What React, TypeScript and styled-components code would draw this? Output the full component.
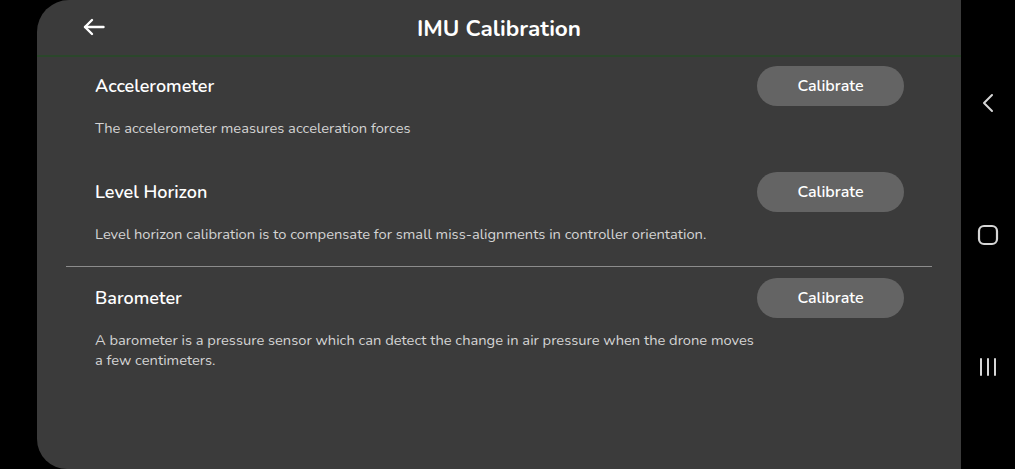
import React from "react";
import styled, { createGlobalStyle } from "styled-components";

const Global = createGlobalStyle`
  html, body { margin: 0; padding: 0; background: #000; }
  body { font-family: "Nunito", "Open Sans", "Noto Sans", sans-serif; }
  * { box-sizing: border-box; }
`;

const Screen = styled.div`
  width: 1015px;
  height: 469px;
  display: flex;
  background: #000;
  overflow: hidden;
`;

const Gutter = styled.div`
  width: 37px;
  flex: none;
`;

const Panel = styled.div`
  width: 924px;
  flex: none;
  background: #3b3b3b;
  border-radius: 32px 0 0 30px;
  display: flex;
  flex-direction: column;
`;

const Header = styled.header`
  height: 57px;
  flex: none;
  display: grid;
  grid-template-columns: 1fr auto 1fr;
  align-items: center;
  padding: 0 0 0 46px;
  border-bottom: 2px solid #2b472b;
`;

const BackButton = styled.button`
  justify-self: start;
  background: none;
  border: 0;
  padding: 0;
  display: flex;
  color: #fff;
  cursor: pointer;
  margin-top: -2px;
`;

const Title = styled.h1`
  margin: 1px 0 0 -46px;
  color: #fff;
  font-size: 22.5px;
  font-weight: 700;
`;

const Content = styled.div`
  display: flex;
  flex-direction: column;
`;

const Section = styled.section<{ $top: number; $bottom: number }>`
  display: flex;
  flex-direction: column;
  gap: 12px;
  padding: ${(p) => p.$top}px 57px ${(p) => p.$bottom}px 58px;
`;

const Row = styled.div`
  display: flex;
  align-items: center;
  justify-content: space-between;
  height: 40px;
`;

const SectionTitle = styled.h2`
  margin: 0;
  color: #fff;
  font-size: 18px;
  font-weight: 600;
`;

const CalibrateButton = styled.button`
  width: 147px;
  height: 40px;
  border: 0;
  border-radius: 20px;
  background: #646464;
  color: #fff;
  font-family: inherit;
  font-size: 16px;
  font-weight: 600;
  cursor: pointer;
`;

const Description = styled.p`
  margin: 0;
  max-width: 664px;
  color: #d4d4d4;
  font-size: 14.7px;
  line-height: 20px;
`;

const Divider = styled.hr`
  margin: 0 29px;
  border: 0;
  border-top: 1px solid #8c8c8c;
`;

const NavBar = styled.nav`
  flex: 1;
  display: flex;
  flex-direction: column;
  align-items: center;
  justify-content: space-between;
  padding: 93px 0 92px;
  color: #d6d6d6;
`;

const NavIcon = styled.svg`
  display: block;
`;

const sections = [
  {
    title: "Accelerometer",
    text: "The accelerometer measures acceleration forces",
    top: 9,
    bottom: 25,
  },
  {
    title: "Level Horizon",
    text: "Level horizon calibration is to compensate for small miss-alignments in controller orientation.",
    top: 9,
    bottom: 22,
  },
];

export default function App() {
  return (
    <>
      <Global />
      <Screen>
        <Gutter />
        <Panel>
          <Header>
            <BackButton aria-label="Back">
              <svg width="22" height="18" viewBox="0 0 22 18" fill="none" stroke="currentColor" strokeWidth="2.4" strokeLinecap="round" strokeLinejoin="round">
                <path d="M20.5 9H2" />
                <path d="M9 2L2 9l7 7" />
              </svg>
            </BackButton>
            <Title>IMU Calibration</Title>
            <span />
          </Header>
          <Content>
            {sections.map((s) => (
              <Section key={s.title} $top={s.top} $bottom={s.bottom}>
                <Row>
                  <SectionTitle>{s.title}</SectionTitle>
                  <CalibrateButton>Calibrate</CalibrateButton>
                </Row>
                <Description>{s.text}</Description>
              </Section>
            ))}
            <Divider />
            <Section $top={11} $bottom={0}>
              <Row>
                <SectionTitle>Barometer</SectionTitle>
                <CalibrateButton>Calibrate</CalibrateButton>
              </Row>
              <Description>
                A barometer is a pressure sensor which can detect the change in air pressure when the drone moves a few centimeters.
              </Description>
            </Section>
          </Content>
        </Panel>
        <NavBar>
          <NavIcon width="12" height="20" viewBox="0 0 12 20" fill="none" stroke="currentColor" strokeWidth="2" strokeLinecap="round" strokeLinejoin="round">
            <path d="M10 2L2 10l8 8" />
          </NavIcon>
          <NavIcon width="22" height="22" viewBox="0 0 22 22" fill="none" stroke="currentColor" strokeWidth="2.2">
            <rect x="2" y="2" width="18" height="18" rx="5" />
          </NavIcon>
          <NavIcon width="20" height="20" viewBox="0 0 20 20" fill="none" stroke="currentColor" strokeWidth="2" strokeLinecap="round">
            <path d="M3 2v16M10 2v16M17 2v16" />
          </NavIcon>
        </NavBar>
      </Screen>
    </>
  );
}
